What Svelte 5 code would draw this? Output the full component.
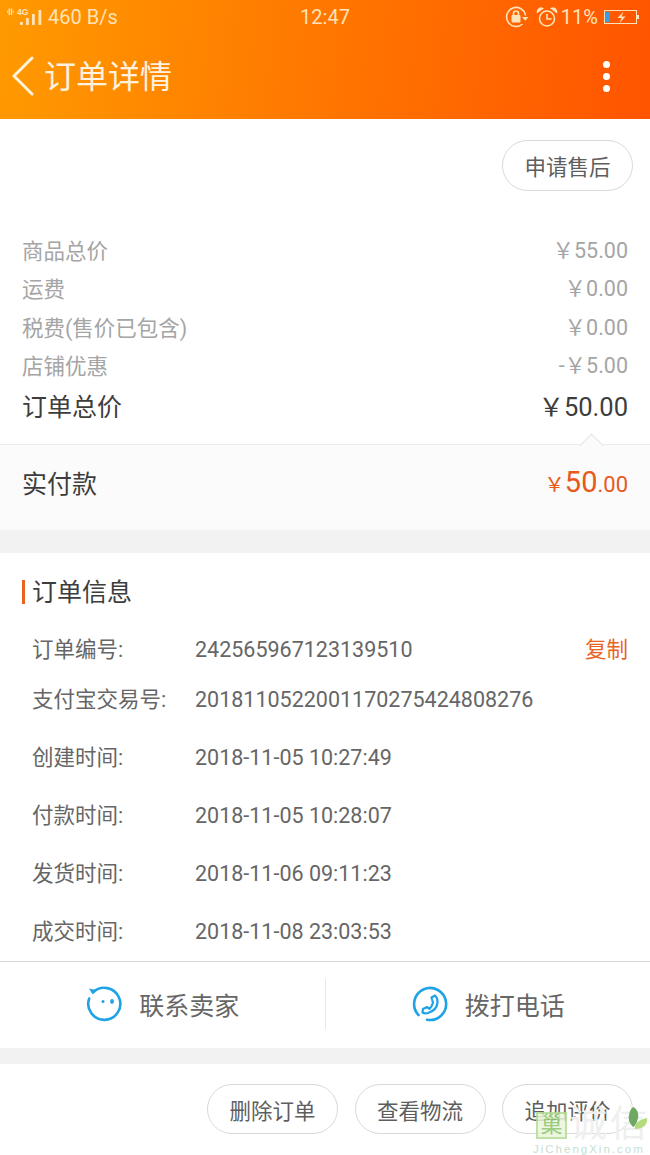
<script>
	const prices = [
		{ label: '商品总价', value: '￥55.00' },
		{ label: '运费', value: '￥0.00' },
		{ label: '税费(售价已包含)', value: '￥0.00' },
		{ label: '店铺优惠', value: '-￥5.00' }
	];

	const info = [
		{ label: '订单编号:', value: '242565967123139510', copy: true, h: 42 },
		{ label: '支付宝交易号:', value: '2018110522001170275424808276', h: 58 },
		{ label: '创建时间:', value: '2018-11-05 10:27:49', h: 58 },
		{ label: '付款时间:', value: '2018-11-05 10:28:07', h: 58 },
		{ label: '发货时间:', value: '2018-11-06 09:11:23', h: 58 },
		{ label: '成交时间:', value: '2018-11-08 23:03:53', h: 59 }
	];

	const actions = ['删除订单', '查看物流', '追加评价'];
</script>

<div class="page">
	<header class="top">
		<div class="status">
			<div class="status-left">
				<svg class="signal" width="39" height="20" viewBox="0 0 39 20" fill="#ffe3b8">
					<path d="M2.500 1.500h1.400v6.500H2.500zM4.800 1.500h1.400v6.500H4.800zM1 4.800 2 3v3.500zM8 4.800 7 3v3.500z" />
					<rect x="14" y="15" width="2.800" height="3" />
					<rect x="20" y="11" width="2.800" height="7" />
					<rect x="26" y="7" width="2.800" height="11" />
					<rect x="32.500" y="3" width="2.800" height="15" />
					<text x="11" y="8" font-size="8.500" font-weight="700" font-family="'Liberation Sans', sans-serif">4G</text>
				</svg>
				<span>460 B/s</span>
			</div>
			<span class="clock">12:47</span>
			<div class="status-right">
				<svg class="lock" width="24" height="24" viewBox="0 0 24 24" fill="none" stroke="#ffe3b8" stroke-width="1.600">
					<path d="M20.500 10.500A9.500 9.500 0 1 0 17.500 19" />
					<path d="M17 12h6.500l-3.200 3.800z" fill="#ffe3b8" stroke="none" />
					<rect x="6.500" y="10" width="9" height="7.500" rx="1" fill="#ffe3b8" stroke="none" />
					<path d="M8.500 10.500V8.500a2.500 2.500 0 0 1 5 0v2" />
				</svg>
				<svg width="22" height="22" viewBox="0 0 22 22" fill="none" stroke="#ffe3b8" stroke-width="1.600">
					<circle cx="11" cy="12.500" r="7.500" />
					<path d="M11 8v5h4.500" />
					<path d="M1.500 6a3.500 3.500 0 0 1 5-3.500zM20.500 6a3.500 3.500 0 0 0-5-3.500z" fill="#ffe3b8" />
				</svg>
				<span class="pct">11%</span>
				<svg width="36" height="16" viewBox="0 0 36 16" fill="none">
					<rect x="0.500" y="1.500" width="32" height="13" stroke="#ffe3b8" />
					<rect x="2" y="3" width="4" height="10" fill="#3d9be0" />
					<rect x="33" y="6" width="2" height="4" fill="#ffe3b8" />
					<path d="M19.500 2.500 13.500 9h4l-2 5 6-6.500h-4z" fill="#ffe3b8" />
				</svg>
			</div>
		</div>
		<div class="bar">
			<svg class="back" width="24" height="40" viewBox="0 0 24 40" fill="none" stroke="#fff3e0" stroke-width="3" stroke-linecap="round" stroke-linejoin="round">
				<path d="M21 2 3 20l18 18" />
			</svg>
			<h1>订单详情</h1>
			<div class="more"><i></i><i></i><i></i></div>
		</div>
	</header>

	<section class="summary">
		<div class="after"><button class="pill large">申请售后</button></div>
		<div class="prices">
			{#each prices as row}
				<div class="price-row">
					<span>{row.label}</span>
					<span class="num">{row.value}</span>
				</div>
			{/each}
		</div>
		<div class="total">
			<span>订单总价</span>
			<span class="num">￥50.00</span>
		</div>
		<div class="paid">
			<span class="caret"></span>
			<span>实付款</span>
			<span class="paid-num"><small class="yen">￥</small><b>50</b><small>.00</small></span>
		</div>
	</section>

	<section class="info">
		<h2>订单信息</h2>
		{#each info as row}
			<div class="info-row" style="height: {row.h}px">
				<span>{row.label}</span>
				<span>{row.value}</span>
				{#if row.copy}<span class="copy">复制</span>{/if}
			</div>
		{/each}
	</section>

	<section class="contact">
		<div class="contact-item">
			<svg width="36" height="36" viewBox="0 0 36 36" fill="none" stroke="#1fa3e6" stroke-width="2.600">
				<path d="M7 6.500A16 16 0 1 1 3.200 12.500" stroke-linecap="round" />
				<path d="M3 2.500 10 4 6.500 8z" fill="#1fa3e6" stroke="none" />
				<circle cx="17" cy="15.500" r="1.500" fill="#1fa3e6" stroke="none" />
				<ellipse cx="26" cy="15.500" rx="1.900" ry="2.400" fill="#1fa3e6" stroke="none" />
			</svg>
			<span>联系卖家</span>
		</div>
		<div class="contact-item divided">
			<svg width="36" height="36" viewBox="0 0 36 36" fill="none" stroke="#1fa3e6" stroke-width="2.600" stroke-linecap="round">
				<path d="M6.500 29A16 16 0 1 1 15 33.700" />
				<path d="M19.500 11.500 23 9.500c2 2 2.800 4.500 2.500 7-.5 5-4.500 9-9.500 10.500-2 .5-4 .5-5.500-.5l.5-3.500 4-2 2.500 1.800c1.500-1.300 2.800-3.500 3.500-6z" stroke-width="2.200" stroke-linejoin="round" />
			</svg>
			<span>拨打电话</span>
		</div>
	</section>

	<footer class="actions">
		{#each actions as label}
			<button class="pill">{label}</button>
		{/each}
	</footer>

	<div class="watermark">
		<span class="mark">巢</span>
		<span class="mark-name">诚信</span>
		<svg class="mark-leaf" width="20" height="24" viewBox="0 0 20 24">
			<path d="M5 0c4 2 6 6 5 11s-3 8-5 9C2 17 0 13 1 8s2-6 4-8z" fill="#6fa860" />
			<path d="M7 22c-1-5 3-9 12-11 1 6-3 11-12 11z" fill="#b4dc7e" />
		</svg>
		<span class="mark-url">JiChengXin.com</span>
	</div>
</div>

<style>
	:global(body) {
		margin: 0;
		background: #fff;
	}

	.page {
		position: relative;
		width: 650px;
		height: 1155px;
		overflow: hidden;
		background: #f2f2f2;
		font-family: Roboto, 'Noto Sans CJK SC', sans-serif;
		color: #555;
	}

	.top {
		height: 119px;
		background: linear-gradient(96deg, #ff9a00 0%, #ff7800 48%, #ff5400 100%);
		color: #ffe3b8;
	}

	.status {
		display: grid;
		grid-template-columns: 1fr auto 1fr;
		align-items: center;
		height: 33px;
		padding: 0 10px 0 6px;
		font-size: 20px;
	}

	.clock {
		margin-left: 4px;
	}

	.status-left {
		display: flex;
		align-items: center;
		gap: 3px;
	}

	.status-right {
		display: flex;
		align-items: center;
		justify-content: flex-end;
		gap: 5px;
	}

	.lock {
		margin-right: 2px;
	}

	.pct {
		margin: 0 1px 0 -2px;
	}

	.bar {
		display: flex;
		align-items: center;
		height: 86px;
		padding: 0 40px 0 11px;
		color: #fff3e0;
	}

	.bar h1 {
		flex: 1;
		margin: 0 0 4px 9px;
		font-size: 32px;
		font-weight: 400;
	}

	.more {
		display: flex;
		flex-direction: column;
		gap: 5px;
	}

	.more i {
		display: block;
		width: 7px;
		height: 7px;
		border-radius: 50%;
		background: #fff;
	}

	.summary {
		background: #fff;
		margin-bottom: 23px;
	}

	.after {
		display: flex;
		justify-content: flex-end;
		padding: 21px 17px 0 0;
		height: 111px;
		box-sizing: border-box;
	}

	.pill {
		box-sizing: border-box;
		width: 131px;
		height: 51px;
		border: 1px solid #d9d9d9;
		border-radius: 26px;
		background: #fff;
		color: #5e5e5e;
		font: inherit;
		font-size: 21.500px;
		padding: 0;
	}

	.prices {
		padding: 0 22px;
		font-size: 21.500px;
		color: #a5a5a5;
	}

	.price-row {
		display: flex;
		justify-content: space-between;
		align-items: center;
		height: 38.500px;
	}

	.price-row .num {
		margin-bottom: 2px;
	}

	.num {
		font-size: 21.500px;
	}

	.total {
		display: flex;
		justify-content: space-between;
		align-items: center;
		height: 46px;
		padding: 0 22px 4px;
		box-sizing: border-box;
		font-size: 25px;
		color: #3d3d3d;
	}

	.total .num {
		font-size: 25.500px;
		margin-bottom: 2px;
	}

	.paid {
		position: relative;
		display: flex;
		justify-content: space-between;
		align-items: center;
		height: 86px;
		padding: 0 22px 12px;
		box-sizing: border-box;
		margin-top: 14px;
		background: #fbfbfb;
		border-top: 1px solid #ececec;
		font-size: 25px;
		color: #3d3d3d;
	}

	.caret {
		position: absolute;
		right: 50px;
		top: -8px;
		width: 16px;
		height: 16px;
		background: #fbfbfb;
		border-top: 1px solid #e6e6e6;
		border-left: 1px solid #e6e6e6;
		transform: rotate(45deg);
	}

	.paid-num {
		color: #e8591a;
		display: flex;
		align-items: baseline;
	}

	.paid-num b {
		font-size: 29px;
		font-weight: 400;
	}

	.paid-num small {
		font-size: 22px;
	}

	.paid-num .yen {
		font-size: 20.500px;
	}

	.info {
		background: #fff;
		height: 409px;
		padding: 0 22px 0 32px;
		box-sizing: border-box;
		border-bottom: 1px solid #d8d8d8;
	}

	.info h2 {
		position: relative;
		margin: 0;
		height: 73px;
		box-sizing: border-box;
		display: flex;
		align-items: center;
		font-size: 25px;
		font-weight: 400;
		color: #3d3d3d;
	}

	.info h2::before {
		content: '';
		position: absolute;
		left: -10px;
		top: 27px;
		width: 3px;
		height: 24px;
		background: #e8641e;
	}

	.info-row {
		display: grid;
		grid-template-columns: 163px 1fr auto;
		align-content: center;
		align-items: baseline;
		font-size: 21.500px;
		color: #666;
	}

	.copy {
		color: #e8641e;
	}

	.contact {
		display: flex;
		align-items: center;
		height: 86px;
		background: #fff;
		margin-bottom: 16px;
	}

	.contact-item {
		flex: 1;
		box-sizing: border-box;
		height: 50px;
		margin-bottom: 2px;
		display: flex;
		align-items: center;
		justify-content: center;
		gap: 17px;
		font-size: 25px;
		color: #666;
	}

	.contact-item svg {
		margin-left: 1px;
	}

	.divided {
		border-left: 1px solid #e8e8e8;
	}

	.actions {
		display: flex;
		justify-content: flex-end;
		gap: 16.500px;
		height: 91px;
		padding: 20px 17px 0 0;
		box-sizing: border-box;
		background: #fff;
	}

	.actions .pill {
		height: 50px;
	}

	.watermark {
		position: absolute;
		left: 533px;
		top: 1105px;
		width: 117px;
		height: 50px;
		pointer-events: none;
	}

	.mark {
		position: absolute;
		left: 3px;
		top: 7px;
		width: 31px;
		height: 27px;
		box-sizing: border-box;
		background: #eaf6da;
		border: 2px solid #b4dc96;
		color: #8cc56c;
		font-size: 22px;
		line-height: 22px;
		text-align: center;
		opacity: 0.85;
	}

	.mark-name {
		position: absolute;
		left: 37px;
		top: 0;
		font-size: 37px;
		line-height: 40px;
		color: #efefef;
		letter-spacing: 3px;
	}

	.mark-leaf {
		position: absolute;
		left: 95px;
		top: 2px;
	}

	.mark-url {
		position: absolute;
		left: 0;
		top: 37px;
		font-family: 'Liberation Sans', sans-serif;
		font-size: 11.500px;
		line-height: 14px;
		letter-spacing: 2px;
		color: #c6e0d2;
		white-space: nowrap;
	}
</style>
